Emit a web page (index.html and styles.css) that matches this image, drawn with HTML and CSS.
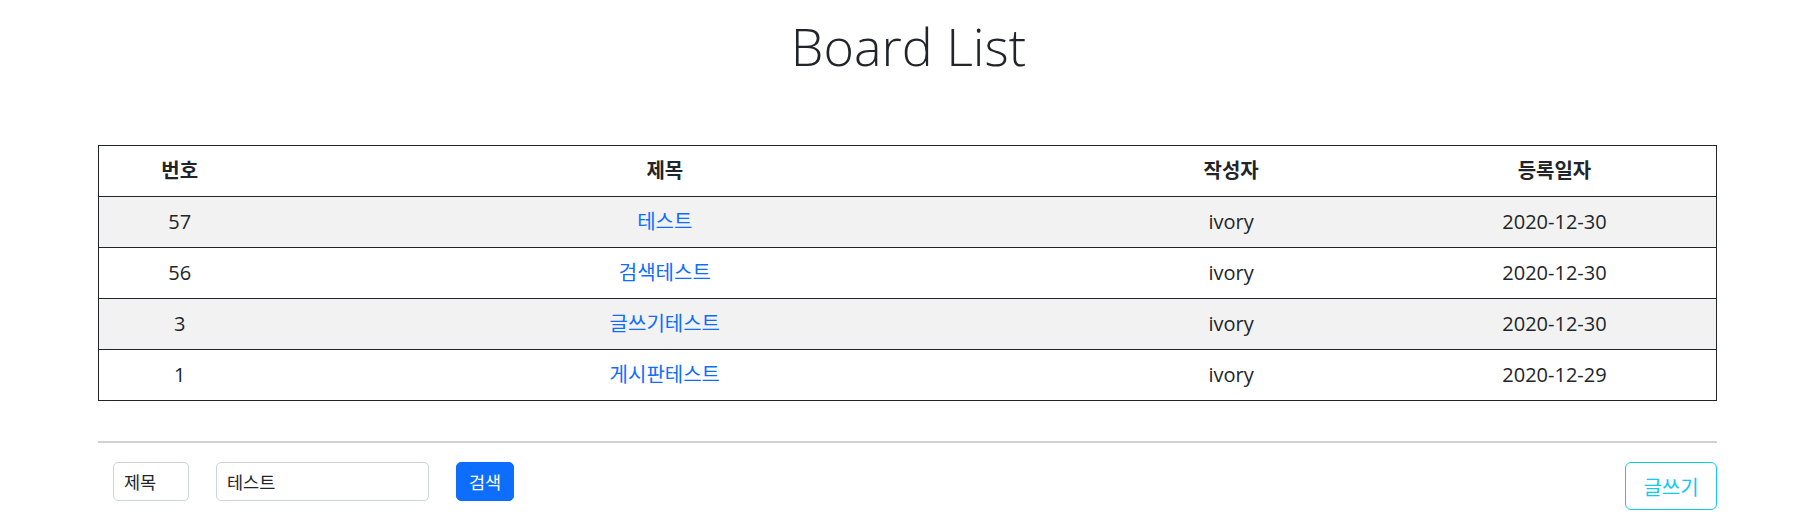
FILE: index.html
```html
<!DOCTYPE html>
<html lang="ko">
<head>
<meta charset="utf-8">
<title>Board List</title>
<link rel="stylesheet" href="styles.css">
</head>
<body>
<div class="page">
  <h1 class="title">Board List</h1>
  <table class="board">
    <colgroup>
      <col class="c-no"><col class="c-title"><col class="c-writer"><col class="c-date">
    </colgroup>
    <thead>
      <tr><th>번호</th><th>제목</th><th>작성자</th><th>등록일자</th></tr>
    </thead>
    <tbody>
      <tr class="odd"><td>57</td><td><a href="#">테스트</a></td><td>ivory</td><td>2020-12-30</td></tr>
      <tr><td>56</td><td><a href="#">검색테스트</a></td><td>ivory</td><td>2020-12-30</td></tr>
      <tr class="odd"><td>3</td><td><a href="#">글쓰기테스트</a></td><td>ivory</td><td>2020-12-30</td></tr>
      <tr><td>1</td><td><a href="#">게시판테스트</a></td><td>ivory</td><td>2020-12-29</td></tr>
    </tbody>
  </table>
  <hr class="divider">
  <div class="toolbar">
    <form class="search">
      <select class="field select"><option>제목</option></select>
      <input class="field text" type="text" value="테스트">
      <button class="btn btn-primary" type="button">검색</button>
    </form>
    <button class="btn btn-outline" type="button">글쓰기</button>
  </div>
</div>
</body>
</html>
```

FILE: styles.css
```css
html, body {
  margin: 0;
  padding: 0;
  background: #fff;
}
body {
  font-family: "Open Sans", "Noto Sans CJK KR", sans-serif;
  color: #212529;
  font-size: 20px;
  line-height: 1.5;
}
.page {
  width: 1619px;
  margin: 0 0 0 98px;
}
.title {
  margin: 0 -100px 0 -98px;
  padding-top: 15px;
  height: 145px;
  box-sizing: border-box;
  font-size: 52px;
  font-weight: 300;
  line-height: 1.2;
  text-align: center;
}
.board {
  width: 1619px;
  border-collapse: collapse;
  border: 1px solid #212529;
}
.c-no { width: 10%; }
.c-title { width: 50%; }
.c-writer { width: 20%; }
.c-date { width: 20%; }
.board th, .board td {
  padding: 10px;
  line-height: 30px;
  text-align: center;
  border-bottom: 1px solid #212529;
}
.board th { font-weight: 700; }
.board tr.odd td { background: #f2f2f2; }
.board a {
  color: #0d6efd;
  text-decoration: none;
}
.divider {
  margin: 40px 0 0;
  border: 0;
  border-top: 2px solid #d0d1d2;
  height: 0;
}
.toolbar {
  display: flex;
  justify-content: space-between;
  align-items: flex-start;
  margin-top: 19px;
  padding-left: 15px;
}
.search {
  display: flex;
  gap: 27px;
  margin: 0;
}
.field {
  box-sizing: border-box;
  height: 39px;
  border: 1px solid #ced4da;
  border-radius: 5px;
  background: #fff;
  color: #212529;
  font-family: "Open Sans", "Noto Sans CJK KR", sans-serif;
  font-size: 17.5px;
  padding: 0 10px;
  margin: 0;
  outline: none;
}
.select {
  width: 76px;
  -webkit-appearance: none;
  appearance: none;
}
.text {
  width: 213px;
}
.btn {
  box-sizing: border-box;
  font-family: "Open Sans", "Noto Sans CJK KR", sans-serif;
  border-radius: 5px;
  margin: 0;
  cursor: pointer;
}
.btn-primary {
  height: 39px;
  width: 58px;
  padding: 0;
  font-size: 17.5px;
  background: #0d6efd;
  border: 1px solid #0d6efd;
  color: #fff;
}
.btn-outline {
  height: 48px;
  width: 92px;
  padding: 0;
  font-size: 20px;
  background: #fff;
  border: 1px solid #0dcaf0;
  color: #0dcaf0;
  border-radius: 6px;
}
```
